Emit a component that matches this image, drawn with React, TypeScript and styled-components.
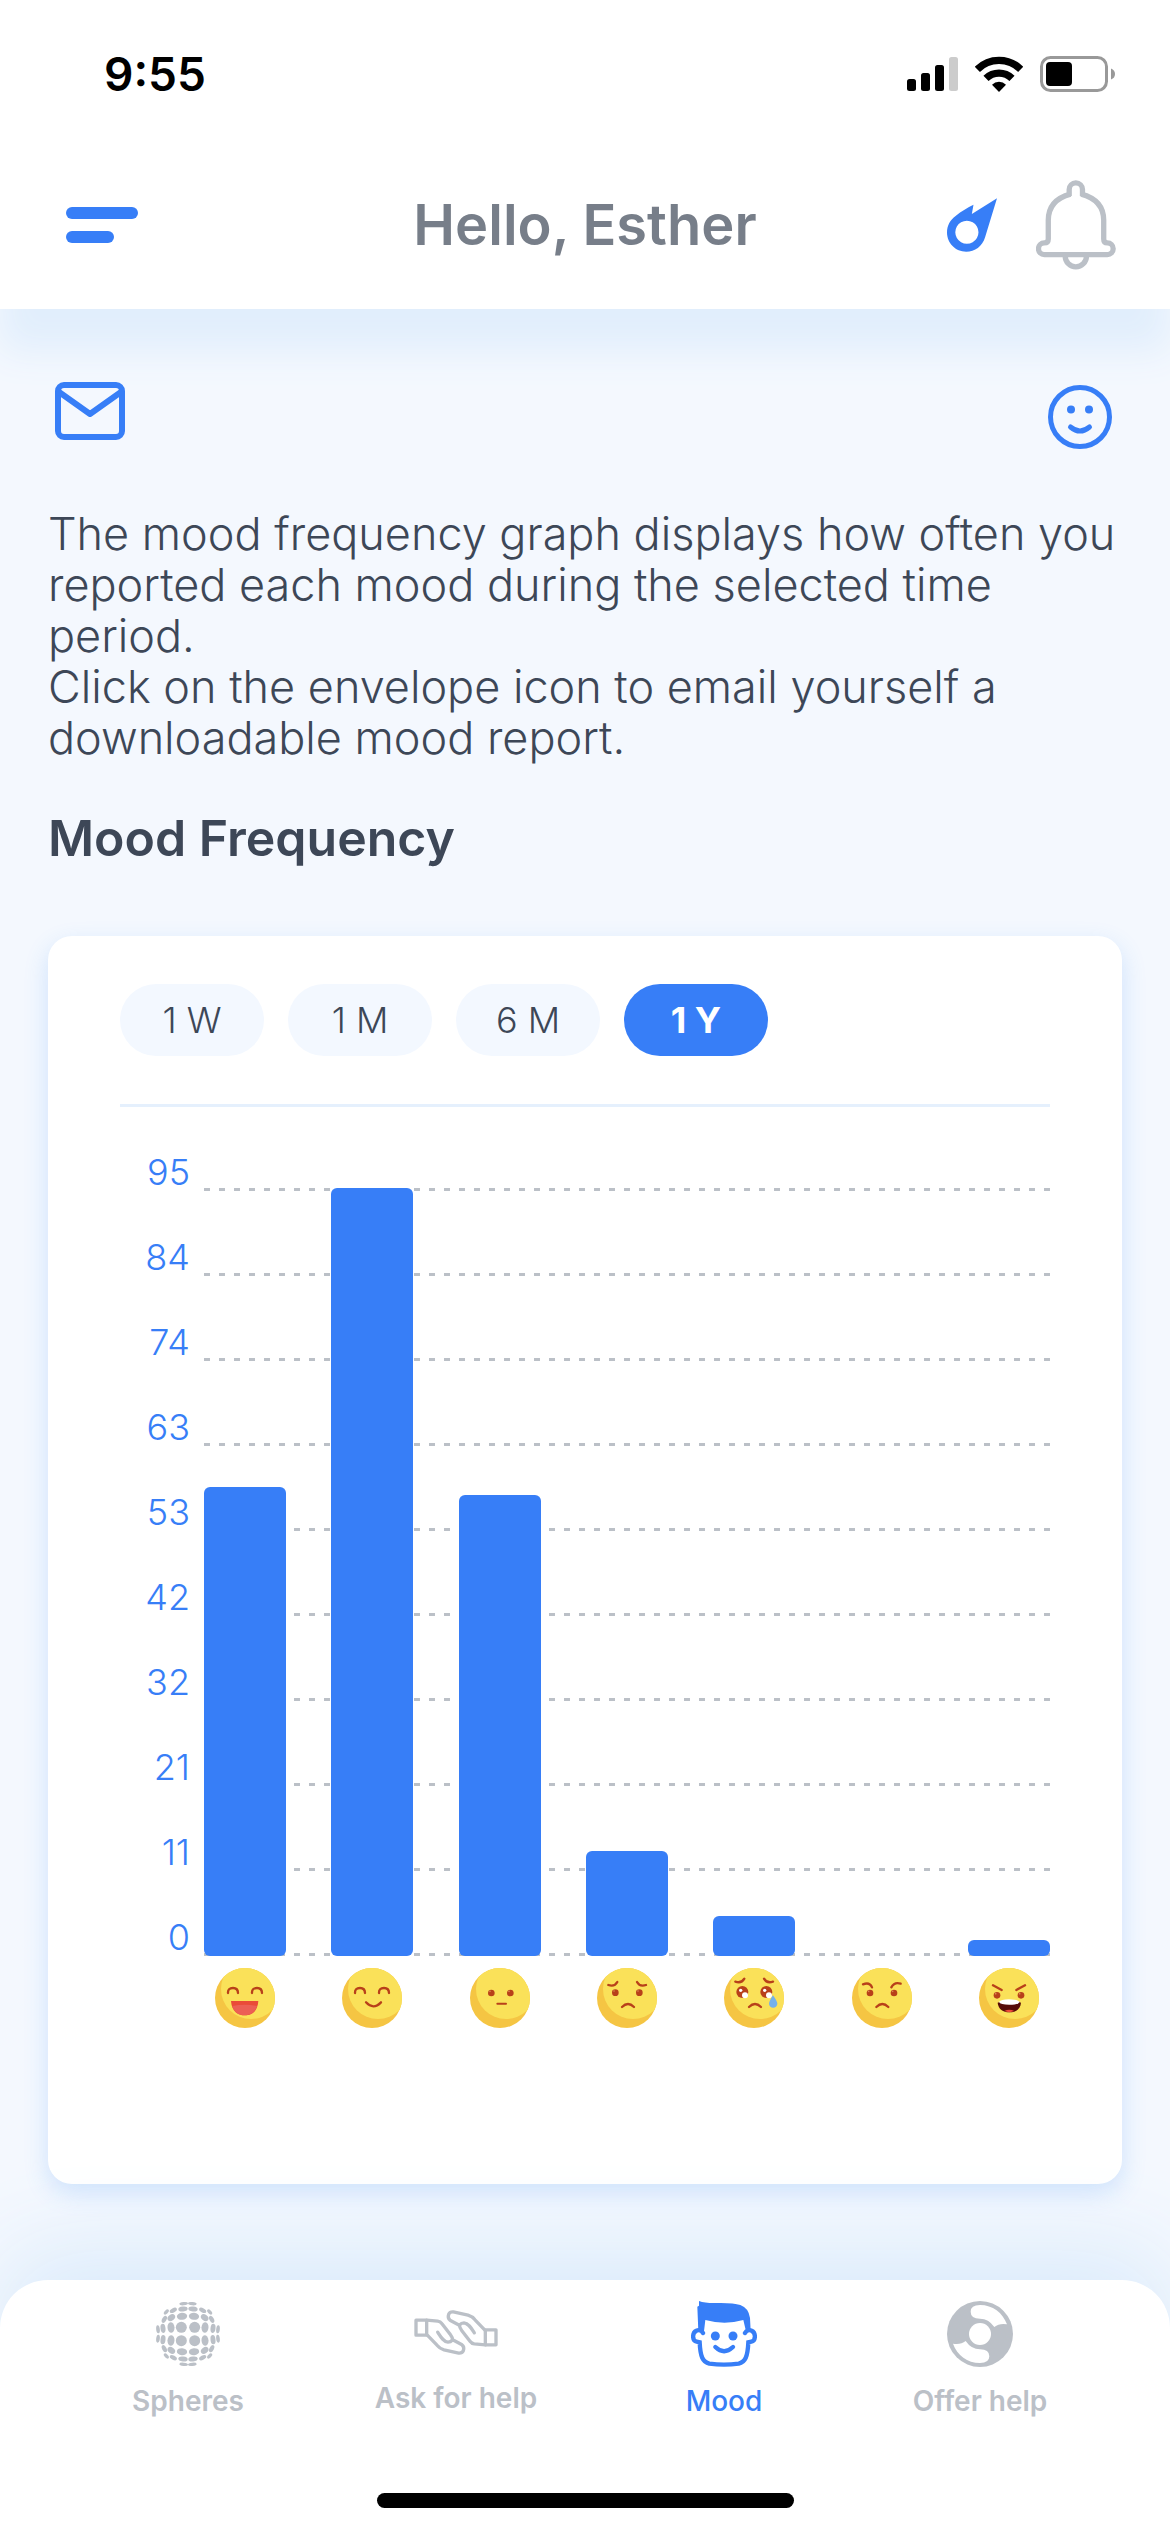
import React, { useState } from 'react';
import styled, { createGlobalStyle } from 'styled-components';

const BLUE = '#377ef7';
const GREY = '#bbc0c7';
const INK = '#3d4757';

const GlobalStyle = createGlobalStyle`
  *, *::before, *::after { box-sizing: border-box; }
  body {
    margin: 0;
    background: #f4f8fe;
    font-family: Inter, 'Open Sans', sans-serif;
    color: ${INK};
  }
  svg { display: block; flex: none; }
`;

const Page = styled.div`
  display: flex;
  flex-direction: column;
  min-height: 100vh;
`;

const Header = styled.header`
  background: #fff;
  box-shadow: 0 42px 36px #e1eefc;
`;

const StatusBar = styled.div`
  display: flex;
  align-items: center;
  justify-content: space-between;
  padding: 44px 55px 37px 104px;
  color: #000;
`;

const Clock = styled.time`
  font-size: 46px;
  line-height: 60px;
  font-weight: 600;
`;

const StatusIcons = styled.div`
  display: flex;
  align-items: center;
  gap: 17px;
`;

const TopBar = styled.div`
  display: grid;
  grid-template-columns: 1fr auto 1fr;
  align-items: center;
  height: 168px;
  padding: 0 54px 0 66px;
`;

const Title = styled.h1`
  margin: 0;
  padding-right: 12px;
  font-size: 56px;
  line-height: 64px;
  font-weight: 600;
  color: #777e89;
`;

const Actions = styled.div`
  display: flex;
  align-items: center;
  justify-content: flex-end;
  gap: 39px;
`;

const IconButton = styled.button`
  display: flex;
  justify-self: start;
  padding: 0;
  border: 0;
  background: none;
  color: ${BLUE};
  cursor: pointer;
`;

const Main = styled.main`
  flex: 1;
  padding: 73px 48px 96px;
`;

const Tools = styled.div`
  display: flex;
  align-items: flex-start;
  justify-content: space-between;
  padding: 0 10px 0 7px;
`;

const Intro = styled.p`
  margin: 59px 0 0;
  font-size: 45px;
  line-height: 51px;
  font-weight: 300;
`;

const SectionTitle = styled.h2`
  margin: 45px 0 0;
  font-size: 50px;
  line-height: 60px;
  font-weight: 600;
`;

const Card = styled.section`
  margin-top: 68px;
  padding: 48px 72px 156px;
  border-radius: 24px;
  background: #fff;
  box-shadow: 0 9px 24px rgba(55, 140, 246, 0.2);
`;

const Periods = styled.div`
  display: flex;
  gap: 24px;
  padding-bottom: 48px;
  border-bottom: 3px solid #e5f0fd;
`;

const Period = styled.button<{ $active: boolean }>`
  width: 144px;
  height: 72px;
  padding: 0;
  border: 0;
  border-radius: 36px;
  font-family: inherit;
  font-size: 36px;
  line-height: 48px;
  font-weight: ${({ $active }) => ($active ? 700 : 300)};
  color: ${({ $active }) => ($active ? '#fff' : INK)};
  background: ${({ $active }) => ($active ? BLUE : '#f3f8ff')};
  cursor: pointer;
`;

const Chart = styled.figure`
  display: grid;
  margin: 36px 0 0;
`;

const Scale = styled.div`
  grid-area: 1 / 1;
  display: grid;
  gap: 37px;
`;

const Tick = styled.div`
  display: grid;
  grid-template-columns: 70px 1fr;
  gap: 14px;
  align-items: end;
  height: 48px;
  font-size: 36px;
  line-height: 38px;
  font-weight: 300;
  text-align: right;
  color: ${BLUE};
`;

const GridLine = styled.div`
  height: 3px;
  background: repeating-linear-gradient(to right, ${GREY} 0 6px, transparent 6px 15px);
`;

const Bars = styled.div`
  grid-area: 1 / 1;
  align-self: end;
  display: flex;
  align-items: flex-end;
  justify-content: space-between;
  height: 768px;
  margin-left: 84px;
`;

const Bar = styled.div`
  width: 82px;
  border-radius: 6px;
  background: ${BLUE};
`;

const Moods = styled.figcaption`
  grid-area: 2 / 1;
  display: flex;
  justify-content: space-between;
  margin: 12px 0 0 84px;
`;

const MoodSlot = styled.div`
  display: flex;
  justify-content: center;
  width: 82px;
`;

const TabBar = styled.nav`
  position: sticky;
  bottom: 0;
  padding: 21px 0 24px;
  border-radius: 48px 48px 0 0;
  background: #fff;
  box-shadow: 0 -30px 90px #dbebfb;
`;

const Tabs = styled.div`
  display: grid;
  grid-template-columns: 268fr 268fr 268fr 244fr;
  padding: 0 68px 0 54px;
`;

const Tab = styled.a<{ $active?: boolean }>`
  display: flex;
  flex-direction: column;
  align-items: center;
  gap: 16px;
  font-size: 28px;
  line-height: 36px;
  font-weight: ${({ $active }) => ($active ? 500 : 600)};
  color: ${({ $active }) => ($active ? BLUE : GREY)};
  text-decoration: none;
`;

const HomeIndicator = styled.div`
  width: 417px;
  height: 15px;
  margin: 74px auto 0;
  border-radius: 8px;
  background: #000;
`;

const SignalIcon = () => (
  <svg width="51" height="34" viewBox="0 0 51 34" aria-hidden="true">
    <rect x="0" y="22" width="9" height="12" rx="2.5" />
    <rect x="14" y="16" width="9" height="18" rx="2.5" />
    <rect x="28" y="8" width="9" height="26" rx="2.5" />
    <rect x="42" y="0" width="9" height="34" rx="2.5" fill="#ccc" />
  </svg>
);

const WifiIcon = () => (
  <svg width="48" height="36" viewBox="0 0 144 108" aria-hidden="true">
    <g fill="none" stroke="#000" strokeWidth="22">
      <path d="M7 40 A92 92 0 0 1 137 40" />
      <path d="M33 67 A56 56 0 0 1 111 67" />
    </g>
    <path d="M51 86 A30 30 0 0 1 93 86 L72 108 Z" />
  </svg>
);

const BatteryIcon = () => (
  <svg width="75" height="36" viewBox="0 0 75 36" aria-hidden="true">
    <rect x="1.5" y="1.5" width="65" height="33" rx="9" fill="none" stroke="#999" strokeWidth="3" />
    <rect x="6" y="6" width="26" height="24" rx="4" />
    <path d="M71 12.500q4 1.500 4 5.500t-4 5.500z" fill="#999" />
  </svg>
);

const MenuIcon = () => (
  <svg width="72" height="36" viewBox="0 0 72 36" aria-hidden="true" fill="currentColor">
    <rect width="72" height="12" rx="6" />
    <rect y="24" width="48" height="12" rx="6" />
  </svg>
);

const CometIcon = () => (
  <svg width="50" height="54" viewBox="170 474 151 162" aria-hidden="true">
    <path
      fill="currentColor"
      fillRule="evenodd"
      d="M321 474 L285 592 C277 619 254 636 228 636 C196 636 170 610 170 578 C170 556 180 540 196 528 C214 513 232 503 250 494 L245 522 Z M230 542 a35 35 0 1 0 0.100 0 Z"
    />
  </svg>
);

const BellIcon = () => (
  <svg width="80" height="90" viewBox="438 419 241 270" aria-hidden="true" fill="none" stroke={GREY} strokeWidth="16" strokeLinejoin="round">
    <path d="M538 467 V447 A20 20 0 0 1 578 447 V467" />
    <path d="M542 461 C500 472 475 498 475 540 V596 Q475 608 463 608 A17.500 17.500 0 0 0 463 643 H653 A17.500 17.500 0 0 0 653 608 Q642 608 642 596 V540 C642 498 616 472 574 461" />
    <path d="M526 648 A32 32 0 0 0 590 648" />
  </svg>
);

const MailIcon = () => (
  <svg width="70" height="58" viewBox="0 0 70 58" aria-hidden="true" fill="none" stroke="currentColor" strokeWidth="6">
    <rect x="3" y="3" width="64" height="52" rx="6" />
    <path d="M4 10 L35 32 L66 10" strokeLinejoin="round" />
  </svg>
);

const SmileIcon = () => (
  <svg width="64" height="67" viewBox="0 -3 64 67" aria-hidden="true">
    <g fill="none" stroke="currentColor" strokeWidth="5">
      <circle cx="32" cy="32" r="29.500" />
      <path d="M22.500 42 Q32 50 41.500 42" strokeLinecap="round" />
    </g>
    <circle cx="23" cy="24.500" r="4" fill="currentColor" />
    <circle cx="41" cy="24.500" r="4" fill="currentColor" />
  </svg>
);

/* One quadrant of the dotted globe: x, y, rx, ry, rotation. */
const DOTS = [
  [20, 20, 16.5, 16.5, 0],
  [51, 19.5, 10.5, 16, 5],
  [75, 17, 7.5, 14, 6],
  [90, 14, 5.5, 12, 6],
  [18, 53, 15.5, 10.5, 6],
  [15, 75, 14, 7.5, 6],
  [13, 91, 13, 5, 5],
  [50, 49, 12.5, 9, 38],
  [71, 44, 11.5, 6.5, 62],
  [44, 71, 11.5, 6.5, 28],
  [65, 66, 9.5, 5, 45],
];

const SpheresIcon = () => (
  <svg width="66" height="66" viewBox="-99 -99 198 198" aria-hidden="true" fill="currentColor">
    {[[1, 1], [-1, 1], [1, -1], [-1, -1]].map(([sx, sy]) => (
      <g key={`${sx}${sy}`} transform={`scale(${sx} ${sy})`}>
        {DOTS.map(([x, y, rx, ry, r]) => (
          <ellipse key={`${x}-${y}`} rx={rx} ry={ry} transform={`translate(${x} ${y}) rotate(${-r})`} />
        ))}
      </g>
    ))}
  </svg>
);

const Hand = () => (
  <>
    <path d="M828 81 H860 V126 H828 Z" />
    <path d="M860 81 L893 84 Q901 85 906 92 L931 124 Q937 132 938 140 L966 155 Q974 161 970 173 Q966 181 956 180 L912 170 Q899 166 891 156 L862 126" />
    <path d="M893 117 C902 131 911 146 924 147 Q932 147 937 141" />
  </>
);

const HandsIcon = () => (
  <svg width="84" height="63" viewBox="822 23.500 252 189" aria-hidden="true" fill="none" stroke="currentColor" strokeWidth="10" strokeLinejoin="round" strokeLinecap="round">
    <Hand />
    <g transform="rotate(180 948 118)">
      <Hand />
    </g>
  </svg>
);

const FaceIcon = () => (
  <svg width="66" height="66" viewBox="63 33 198 198" aria-hidden="true">
    <path
      fill="currentColor"
      d="M87 33 Q106 40 140 39 Q190 38 211 45 Q236 54 240 84 L242 122 L228 124 L220 90 Q164 106 106 90 L102 124 L85 124 L82 50 L87 47 Z"
    />
    <g fill="none" stroke="currentColor" strokeWidth="13" strokeLinecap="round">
      <path d="M99 129 C95 121 86 119 79 122 C66 128 66 152 80 155 L89 157 C91 200 98 216 118 221 Q162 227 206 221 C226 216 233 200 235 157 L244 155 C258 152 258 128 245 122 C238 119 229 121 225 129" />
      <path d="M136 171 Q162 196 189 171" />
    </g>
    <circle cx="136" cy="138" r="13.500" fill="currentColor" />
    <circle cx="189" cy="138" r="13.500" fill="currentColor" />
  </svg>
);

const BUOY_GAP = 'M930 45 C968 45 998 68 1011 103 Q988 99 973 111 Q956 86 930 86 Q902 86 902 65 Q902 45 930 45 Z';

const BuoyIcon = () => (
  <svg width="66" height="66" viewBox="831 33 198 198" aria-hidden="true">
    <circle cx="930" cy="132" r="99" fill="currentColor" />
    <g fill="#fff">
      <circle cx="930" cy="132" r="33" />
      <path d={BUOY_GAP} />
      <path d={BUOY_GAP} transform="rotate(180 930 132)" />
    </g>
  </svg>
);

const BROWN = '#b8401a';
const happyEyes = <path d="M39 75 Q38 60 54 60 Q69 60 69 75 M111 75 Q110 60 126 60 Q141 60 141 75" />;
const frown = <path d="M75 117 Q93 99 111 117" />;
const sadBrows = <path d="M34 51 Q53 57 61 42 M120 42 Q128 57 147 51" />;
const eyes = (x1: number, x2: number, y: number) => (
  <g fill={BROWN} stroke="none">
    <circle cx={x1} cy={y} r="10" />
    <circle cx={x2} cy={y} r="10" />
    <circle cx={x1 - 4} cy={y - 5} r="2.500" fill="#dc8a55" />
    <circle cx={x2 - 4} cy={y - 5} r="2.500" fill="#dc8a55" />
  </g>
);
const wetEye = (x: number) => (
  <g stroke="none">
    <circle cx={x} cy="72" r="18" fill={BROWN} />
    <circle cx={x + 8} cy="82" r="9" fill="#fff" />
    <circle cx={x - 5} cy="67" r="5" fill="#fff" />
  </g>
);

const FACES: Record<string, React.ReactNode> = {
  Great: (
    <>
      {happyEyes}
      <path d="M48 99 H130 C128 130 110 142 89 142 S50 130 48 99 Z" fill="#ea4b38" stroke="none" />
      <path d="M52 114 Q89 107 126 114 C120 134 106 142 89 142 S58 134 52 114 Z" fill="#ec5f55" stroke="none" />
    </>
  ),
  Happy: (
    <>
      {happyEyes}
      <path d="M72 103 Q94 127 117 103" />
    </>
  ),
  Neutral: (
    <>
      {eyes(64, 121, 75)}
      <path d="M82 107 H108" strokeWidth="6" />
    </>
  ),
  Sad: (
    <>
      {sadBrows}
      {eyes(55, 127, 74)}
      {frown}
    </>
  ),
  Crying: (
    <>
      <g transform="translate(0 -10)">{sadBrows}</g>
      {wetEye(55)}
      {wetEye(127)}
      {frown}
      <path d="M147 82 Q160 100 160 107 A12.500 12.500 0 0 1 135 107 Q135 100 147 82 Z" fill="#74b0ea" stroke="none" />
    </>
  ),
  Annoyed: (
    <>
      <path d="M33 49 Q53 41 60 58 M118 58 Q127 41 146 47" />
      {eyes(54, 126, 75)}
      <g transform="translate(-2 0)">{frown}</g>
    </>
  ),
  Angry: (
    <>
      <path d="M42 52 L68 66 M138 52 L112 66" />
      {eyes(54, 126, 82)}
      <path d="M56 104 Q90 90 126 104 C124 124 110 133 91 133 S58 124 56 104 Z" fill="#560c08" stroke="none" />
      <path d="M60 102 Q66 94 90 94 T122 102 Q118 110 91 110 T60 102 Z" fill="#fff" stroke="none" />
      <path d="M76 129 Q91 121 106 129 Q91 136 76 129 Z" fill="#ee4b3a" stroke="none" />
    </>
  ),
};

const Emoji = ({ mood }: { mood: string }) => (
  <svg width="60" height="60" viewBox="0 0 180 180" role="img" aria-label={mood}>
    <clipPath id={`face-${mood}`}>
      <circle cx="90" cy="90" r="90" />
    </clipPath>
    <circle cx="90" cy="90" r="90" fill="#f5c543" />
    <circle cx="108" cy="63" r="90" fill="#fae159" clipPath={`url(#face-${mood})`} />
    <g fill="none" stroke={BROWN} strokeWidth="7" strokeLinecap="round">
      {FACES[mood]}
    </g>
  </svg>
);

const MAX = 95;
const TICKS = [95, 84, 74, 63, 53, 42, 32, 21, 11, 0];
const DATA = [
  { mood: 'Great', count: 58 },
  { mood: 'Happy', count: 95 },
  { mood: 'Neutral', count: 57 },
  { mood: 'Sad', count: 13 },
  { mood: 'Crying', count: 5 },
  { mood: 'Annoyed', count: 0 },
  { mood: 'Angry', count: 2 },
];
const PERIODS = ['1 W', '1 M', '6 M', '1 Y'];

export default function App() {
  const [period, setPeriod] = useState('1 Y');

  return (
    <Page>
      <GlobalStyle />
      <Header>
        <StatusBar>
          <Clock>9:55</Clock>
          <StatusIcons>
            <SignalIcon />
            <WifiIcon />
            <BatteryIcon />
          </StatusIcons>
        </StatusBar>
        <TopBar>
          <IconButton aria-label="Menu"><MenuIcon /></IconButton>
          <Title>Hello, Esther</Title>
          <Actions>
            <IconButton aria-label="Streak"><CometIcon /></IconButton>
            <IconButton aria-label="Notifications"><BellIcon /></IconButton>
          </Actions>
        </TopBar>
      </Header>

      <Main>
        <Tools>
          <IconButton aria-label="Email report"><MailIcon /></IconButton>
          <IconButton aria-label="Log mood"><SmileIcon /></IconButton>
        </Tools>
        <Intro>
          The mood frequency graph displays how often you reported each mood during the selected time period.
          <br />
          Click on the envelope icon to email yourself a downloadable mood report.
        </Intro>
        <SectionTitle>Mood Frequency</SectionTitle>

        <Card>
          <Periods>
            {PERIODS.map((p) => (
              <Period key={p} $active={p === period} aria-pressed={p === period} onClick={() => setPeriod(p)}>
                {p}
              </Period>
            ))}
          </Periods>
          <Chart>
            <Scale>
              {TICKS.map((t) => (
                <Tick key={t}>
                  {t}
                  <GridLine />
                </Tick>
              ))}
            </Scale>
            <Bars>
              {DATA.map(({ mood, count }) => (
                <Bar key={mood} style={{ height: `${(count / MAX) * 100}%` }} />
              ))}
            </Bars>
            <Moods>
              {DATA.map(({ mood }) => (
                <MoodSlot key={mood}>
                  <Emoji mood={mood} />
                </MoodSlot>
              ))}
            </Moods>
          </Chart>
        </Card>
      </Main>

      <TabBar>
        <Tabs>
          <Tab href="#spheres"><SpheresIcon />Spheres</Tab>
          <Tab href="#ask"><HandsIcon />Ask for help</Tab>
          <Tab href="#mood" $active aria-current="page"><FaceIcon />Mood</Tab>
          <Tab href="#offer"><BuoyIcon />Offer help</Tab>
        </Tabs>
        <HomeIndicator />
      </TabBar>
    </Page>
  );
}
